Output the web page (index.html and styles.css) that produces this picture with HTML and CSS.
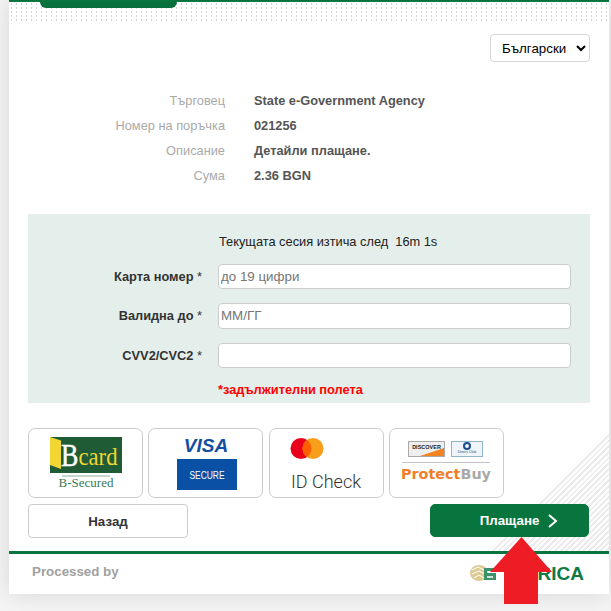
FILE: index.html
```html
<!DOCTYPE html>
<html lang="bg">
<head>
    <meta charset="UTF-8">
    <title>Плащане</title>
    <link rel="stylesheet" href="styles.css">
</head>
<body>
    <div class="page">
        <div class="top-strip"><div class="top-tab"></div></div>

        <div class="lang-row">
            <select class="lang-select">
                <option>Български</option>
                <option>English</option>
            </select>
        </div>

        <div class="info">
            <div class="info-row"><span class="info-label">Търговец</span><span class="info-value">State e-Government Agency</span></div>
            <div class="info-row"><span class="info-label">Номер на поръчка</span><span class="info-value">021256</span></div>
            <div class="info-row"><span class="info-label">Описание</span><span class="info-value">Детайли плащане.</span></div>
            <div class="info-row"><span class="info-label">Сума</span><span class="info-value">2.36 BGN</span></div>
        </div>

        <form class="card-form">
            <div class="session">Текущата сесия изтича след&nbsp; 16m 1s</div>
            <div class="form-row">
                <label for="pan">Карта номер <span class="star">*</span></label>
                <input type="text" id="pan" placeholder="до 19 цифри">
            </div>
            <div class="form-row">
                <label for="exp">Валидна до <span class="star">*</span></label>
                <input type="text" id="exp" placeholder="ММ/ГГ">
            </div>
            <div class="form-row">
                <label for="cvv">CVV2/CVC2 <span class="star">*</span></label>
                <input type="text" id="cvv">
            </div>
            <div class="required"><span class="required-star">*</span>задължителни полета</div>
        </form>

        <div class="lower">
            <div class="brands">
                <div class="brand">
                    <svg width="113" height="68" viewBox="0 0 113 68">
                        <rect x="21" y="8" width="72" height="36" fill="#1f5c36"/>
                        <path d="M21 8l11 3.500V40l-11-4z" fill="#f2d634"/>
                        <text transform="translate(32 36.500) scale(1 1.230)" class="bcard-b">B</text>
                        <text x="49.500" y="36" class="bcard-card" textLength="39" lengthAdjust="spacingAndGlyphs">card</text>
                        <rect x="33" y="46" width="48" height="2" fill="#c5d8cb"/>
                        <text x="57" y="58" class="bcard-sec">B-Secured</text>
                    </svg>
                </div>
                <div class="brand">
                    <svg width="113" height="68" viewBox="0 0 113 68">
                        <text x="57" y="23" class="visa">VISA</text>
                        <rect x="28" y="30" width="60" height="31" fill="#0a51a5"/>
                        <text x="58" y="50" class="visa-sec" textLength="35" lengthAdjust="spacingAndGlyphs">SECURE</text>
                    </svg>
                </div>
                <div class="brand">
                    <svg width="113" height="68" viewBox="0 0 113 68">
                        <circle cx="31" cy="19.500" r="10.500" fill="#eb001b"/>
                        <circle cx="43" cy="19.500" r="10.500" fill="#f79e1b"/>
                        <path d="M37 10.900a10.500 10.500 0 0 1 0 17.200a10.500 10.500 0 0 1 0-17.200z" fill="#ff5f00"/>
                        <text x="21" y="59" class="idcheck" textLength="70" lengthAdjust="spacingAndGlyphs">ID Check</text>
                    </svg>
                </div>
                <div class="brand">
                    <svg width="113" height="68" viewBox="0 0 113 68">
                        <rect x="18.500" y="12.500" width="36" height="15" fill="#eee" stroke="#aaa"/>
                        <path d="M30 27l24-8v8z" fill="#f58220"/>
                        <text x="36.500" y="20" class="discover">DISCOVER</text>
                        <rect x="61.500" y="12.500" width="31" height="15" fill="#eef4f8" stroke="#8fb4cc"/>
                        <circle cx="77" cy="17" r="3" fill="none" stroke="#1c4f8a" stroke-width="2"/>
                        <text x="77" y="24" class="diners">Diners Club</text>
                        <rect x="12" y="33" width="88" height="1" fill="#c4c4c4"/>
                        <text x="11" y="49.500" class="protect" textLength="90" lengthAdjust="spacingAndGlyphs">Protect<tspan class="buy">Buy</tspan></text>
                    </svg>
                </div>
            </div>
            <div class="actions">
                <button type="button" class="btn-back">Назад</button>
                <button type="button" class="btn-pay">Плащане
                    <svg width="12" height="14" viewBox="0 0 12 14"><path d="M2 1l7 6-7 6" fill="none" stroke="#fff" stroke-width="2"/></svg>
                </button>
            </div>
        </div>

        <div class="footer">
            <span class="processed">Processed by</span>
            <div class="bank-logo">
                <svg width="32" height="20" viewBox="0 0 32 20">
                    <ellipse cx="9" cy="9" rx="9" ry="8" fill="#dccb95"/>
                    <path d="M2 6l6-3 6 3M2 10l7-3 6 3M4 14l5-3 5 3" fill="none" stroke="#fff" stroke-width="1"/>
                    <path d="M14 4h12v3H17v2h9v7H14z" fill="#3c9268"/>
                    <path d="M17 12h6v2h-6z" fill="#cfe4d8"/>
                </svg>
                <span class="bank-name">BORICA</span>
            </div>
        </div>
    </div>

    <!-- червената стрелка е нарисувана върху страницата -->
    <svg class="red-arrow" width="62" height="67" viewBox="0 0 62 67">
        <path d="M31.500 0L62 35H48V67H14V35H0z" fill="#ee1c25"/>
    </svg>
</body>
</html>
```

FILE: styles.css
```css
html, body {
    margin: 0;
    height: 611px;
    overflow: hidden;
}
body {
    font-family: "Liberation Sans", Arial, sans-serif;
    font-size: 12.8px;
    background-color: #f4f4f4;
}
.page {
    margin-left: 9px;
    width: 600px;
    height: 594px;
    background-color: white;
    box-shadow: 0 0 22px rgba(0, 0, 0, 0.12);
    display: flex;
    flex-direction: column;
}
.top-strip {
    height: 20px;
    border-top: 2px solid #08753f;
    background-image: radial-gradient(#d4d4d4 0.7px, transparent 0.9px);
    background-size: 5px 4px;
}
.top-tab {
    margin-left: 31px;
    width: 137px;
    height: 6px;
    background-color: #08703c;
    border-radius: 0 0 10px 10px;
}
.lang-row {
    display: flex;
    justify-content: flex-end;
    padding: 12px 19px 0 0;
}
.lang-select {
    width: 100px;
    height: 28px;
    padding-left: 7px;
    font-family: "Liberation Sans", Arial, sans-serif;
    font-size: 13.333px;
    color: black;
    background-color: white;
    border: 1px solid #d8d8d8;
    border-radius: 4px;
}
.info {
    margin-top: 26px;
}
.info-row {
    display: grid;
    grid-template-columns: 216px auto;
    column-gap: 29px;
    height: 25px;
    line-height: 25px;
}
.info-label {
    text-align: right;
    color: #aaa;
}
.info-value {
    font-weight: bold;
    color: #555;
}
.card-form {
    margin: 26px 19px 0 19px;
    height: 189px;
    background-color: #e4eeea;
    box-sizing: border-box;
    padding-top: 21px;
}
.session {
    margin-left: 191px;
    height: 28.500px;
    line-height: 14px;
    color: #222;
}
.form-row {
    display: flex;
    align-items: center;
    margin-bottom: 14px;
}
.form-row label {
    width: 174px;
    text-align: right;
    font-weight: bold;
    color: #333;
}
.star {
    font-weight: normal;
}
.form-row input {
    margin-left: 16px;
    width: 353px;
    height: 25.500px;
    box-sizing: border-box;
    padding: 0 2px;
    font-family: "Liberation Sans", Arial, sans-serif;
    font-size: 13.333px;
    background-color: white;
    border: 1px solid #ccc;
    border-radius: 4px;
}
.required {
    margin: 11px 0 0 190px;
    font-weight: bold;
    color: #f00;
}
.lower {
    position: relative;
    padding: 25px 19px 13px 19px;
}
.lower::before {
    content: "";
    position: absolute;
    right: 0;
    bottom: 0;
    width: 121px;
    height: 121px;
    background-image: repeating-linear-gradient(135deg, #ececec 0 2px, transparent 2px 4px);
    clip-path: polygon(100% 0, 100% 100%, 0 100%);
}
.brands {
    position: relative;
    display: flex;
    gap: 5.330px;
}
.brand {
    width: 115px;
    height: 70px;
    box-sizing: border-box;
    background-color: white;
    border: 1px solid #ccc;
    border-radius: 7px;
}
.brand svg {
    display: block;
}
.bcard-b {
    font-family: "Liberation Serif", serif;
    font-size: 26px;
    fill: white;
    stroke: white;
    stroke-width: 0.4px;
}
.bcard-card {
    font-family: "Liberation Serif", serif;
    font-size: 25px;
    fill: #f2d634;
}
.bcard-sec {
    font-family: "Liberation Serif", serif;
    font-size: 13px;
    text-anchor: middle;
    fill: #3b7a55;
}
.visa {
    font-size: 19px;
    font-weight: bold;
    font-style: italic;
    text-anchor: middle;
    fill: #12509f;
}
.visa-sec {
    font-size: 11px;
    text-anchor: middle;
    fill: white;
}
.idcheck {
    font-family: Roboto, sans-serif;
    font-size: 18px;
    font-weight: 300;
    fill: #333;
}
.discover {
    font-size: 5.500px;
    font-weight: bold;
    text-anchor: middle;
    fill: #222;
}
.diners {
    font-size: 3.500px;
    text-anchor: middle;
    fill: #1c4f8a;
}
.protect {
    font-family: "DejaVu Sans", sans-serif;
    font-size: 14px;
    font-weight: bold;
    fill: #ef7f2d;
}
.buy {
    fill: #a9a9a9;
}
.actions {
    position: relative;
    display: flex;
    justify-content: space-between;
    align-items: flex-start;
    margin-top: 6px;
}
.btn-back {
    width: 160px;
    height: 34px;
    font-family: "Liberation Sans", Arial, sans-serif;
    font-size: 13.333px;
    font-weight: bold;
    color: #333;
    background-color: white;
    border: 1px solid #ccc;
    border-radius: 4px;
}
.btn-pay {
    width: 159px;
    height: 33px;
    margin-right: 1px;
    font-family: "Liberation Sans", Arial, sans-serif;
    font-size: 13.333px;
    font-weight: bold;
    color: white;
    background-color: #08753f;
    border: 1px solid #08753f;
    border-radius: 5px;
    padding: 0 0 0 20px;
    display: flex;
    align-items: center;
    justify-content: center;
    gap: 8px;
}
.footer {
    border-top: 3px solid #08753f;
    display: flex;
    justify-content: space-between;
    align-items: center;
    padding: 0 25px 0 23px;
    flex: 1;
}
.processed {
    font-size: 13.333px;
    font-weight: bold;
    color: #a0a0a0;
    margin-bottom: 6px;
}
.bank-logo {
    display: flex;
    align-items: center;
    gap: 7px;
}
.bank-name {
    font-size: 19px;
    font-weight: bold;
    color: #0e7a45;
}
.red-arrow {
    position: absolute;
    left: 490px;
    top: 537px;
}
```
